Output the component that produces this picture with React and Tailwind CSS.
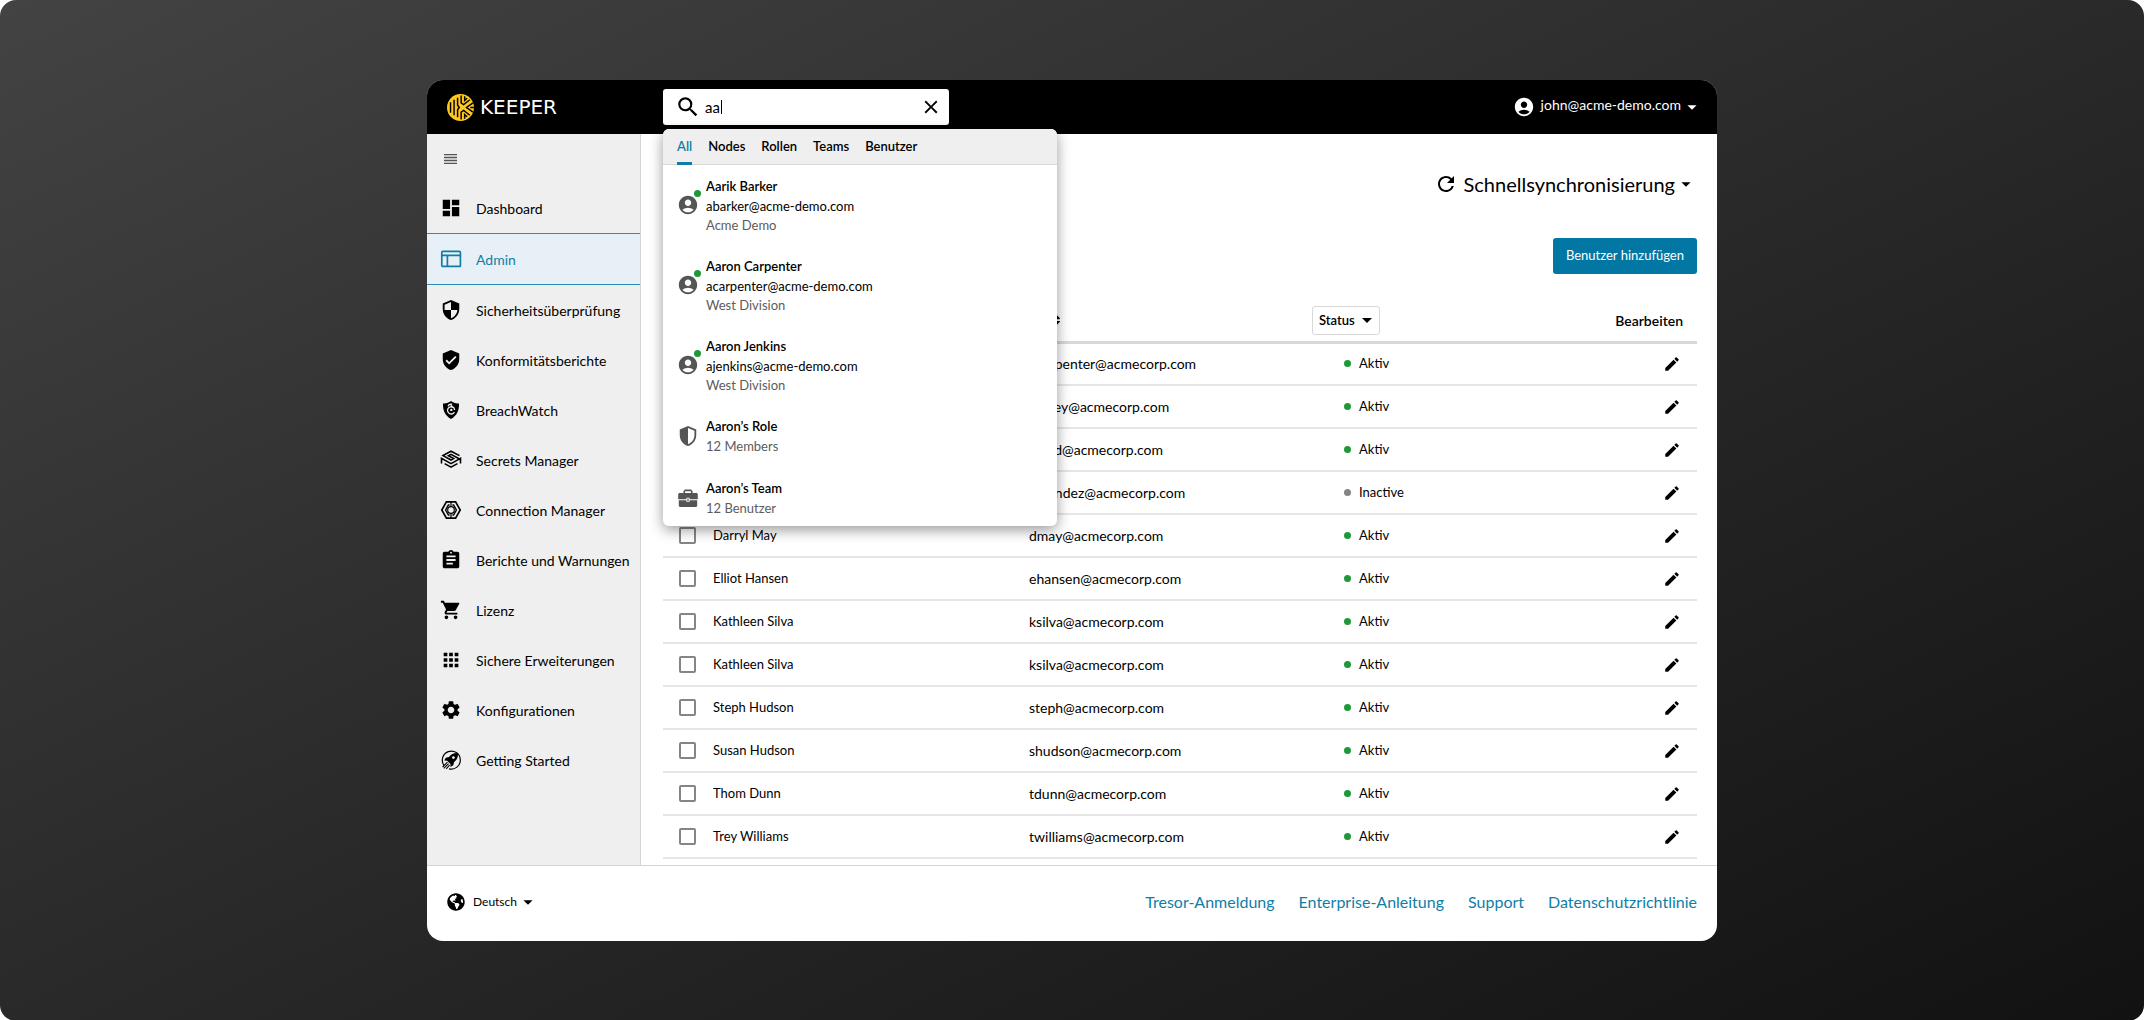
import { useState } from 'react'
import {
  MdDashboard, MdSecurity, MdVerifiedUser, MdAssignment, MdShoppingCart, MdApps, MdSettings,
  MdAccountCircle, MdSearch, MdClose, MdRefresh, MdArrowDropDown, MdEdit,
} from 'react-icons/md'
import { FaGlobeAmericas, FaSort } from 'react-icons/fa'

function KeeperMark() {
  return (
    <svg viewBox="0 0 26 26" className="size-[27px]" fill="none" stroke="#000" strokeWidth="1.4">
      <circle cx="13" cy="13" r="13" fill="#ffc81f" stroke="none" />
      <path d="M3.4 8v10M6.8 5.5v15M10.2 3.5v7.3l1.6 2.2-1.6 2.2v7.3" />
      <path d="M13.6 1.5v7l2.4 1.6 6-4.6M13.6 24.5v-7l2.4-1.6 6 4.6" />
      <path d="M17 2.2v3.9l2.4-2M17 23.8v-3.9l2.4 2" />
      <path d="M25 8.6l-6.2 4.4 6.2 4.4M22.4 13H26" />
    </svg>
  )
}

function AdminIcon() {
  return (
    <svg viewBox="0 0 22 22" className="size-[22px]" fill="none" stroke="currentColor" strokeWidth="1.7">
      <rect x="1.8" y="3.4" width="18.6" height="15" rx="1" />
      <path d="M1.8 7.4h18.6M7.4 7.4v11" />
    </svg>
  )
}

function BreachWatchIcon() {
  return (
    <svg viewBox="0 0 22 22" className="size-[22px]">
      <path d="M3 4.4c3 .3 5.8-.5 8-2.4 2.2 1.9 5 2.7 8 2.4.3 6.8-2 12-8 15.6C5 16.4 2.7 11.2 3 4.4z" fill="currentColor" />
      <path d="M13.4 8.6a3.6 3.6 0 1 0 1 4.3M8 7.2c.6-1.5 2-2.2 3.4-2-.6.9-.4 1.7.6 2.2 1.7.9 2.6 2 2.6 3.6" fill="none" stroke="#efefef" strokeWidth="1.3" />
      <circle cx="11.3" cy="10.9" r="1.2" fill="#efefef" />
    </svg>
  )
}

function SecretsIcon() {
  return (
    <svg viewBox="0 0 22 22" className="size-[22px]" fill="none" stroke="currentColor" strokeWidth="1.6">
      <path d="M19.5 6.6L11 2.2 3 6.6l8 4.4 2.6-1.4-5.2-2.9L11 5.3l8.6 4.7" />
      <path d="M1.5 14.4V9.4L11 14.6l9.5-5.2v5" />
      <path d="M4.6 14.6L11 18.2l6.4-3.6" />
    </svg>
  )
}

function ConnectionIcon() {
  return (
    <svg viewBox="0 0 22 22" className="size-[22px]" fill="none" stroke="currentColor" strokeWidth="1.7">
      <path d="M6.4 2.8h9.2L20.2 11l-4.6 8.2H6.4L1.8 11z" />
      <path d="M9.6 6H8.4L5.6 11l2.8 5h1.2M12.4 6h1.2l2.8 5-2.8 5h-1.2" strokeWidth="1.4" />
      <path d="M11 3v4.5M11 14.5V19" strokeWidth="1.2" />
      <circle cx="11" cy="11" r="3.3" strokeWidth="1.2" />
    </svg>
  )
}

function RocketIcon() {
  return (
    <svg viewBox="0 0 22 22" className="size-[22px]">
      <path d="M4.2 16.6A9 9 0 1 1 9 19.8" fill="none" stroke="currentColor" strokeWidth="1.2" />
      <path d="M18 4c-4.2-.3-7 1.2-9 4l-3.2.8-1.6 2.8 3 .1 3.2 3.2.1 3 2.8-1.6.8-3.2c2.8-2 4.2-4.9 3.9-9.1z" fill="currentColor" />
      <circle cx="13.4" cy="8.6" r="1.4" fill="#efefef" />
      <path d="M7.4 13.2L2.6 18M8.6 14.6l-4.8 4.8M9.6 16.2l-3.4 3.6" stroke="currentColor" strokeWidth="1.1" />
    </svg>
  )
}

function HalfShieldIcon() {
  return (
    <svg viewBox="0 0 24 24" className="size-[22px]" fill="currentColor" fillRule="evenodd">
      <path d="M12 1L3 5v6c0 5.55 3.84 10.74 9 12 5.16-1.26 9-6.45 9-12V5l-9-4zm0 2.2l7 3.1V11c0 4.5-2.9 8.7-7 9.9V3.2z" />
    </svg>
  )
}

function BriefcaseIcon() {
  return (
    <svg viewBox="0 0 22 22" className="size-[22px]" fill="currentColor">
      <path d="M8 2.6h6l1.6 1.6V6H14V4.2H8V6H6.4V4.2z" />
      <path d="M2.6 6h16.8c.8 0 1.4.6 1.4 1.4v4.8h-8.2v-1.4H9.4v1.4H1.2V7.4C1.2 6.6 1.8 6 2.6 6z" />
      <path d="M1.8 13.2h7.6v1.6h3.2v-1.6h7.6v5.4c0 .8-.5 1.4-1.3 1.4H3.1c-.8 0-1.3-.6-1.3-1.4z" />
      <path d="M10.4 11.6h1.2v2.4h-1.2z" />
    </svg>
  )
}

const navItems = [
  { label: 'Dashboard', icon: MdDashboard },
  { label: 'Admin', icon: AdminIcon },
  { label: 'Sicherheitsüberprüfung', icon: MdSecurity },
  { label: 'Konformitätsberichte', icon: MdVerifiedUser },
  { label: 'BreachWatch', icon: BreachWatchIcon },
  { label: 'Secrets Manager', icon: SecretsIcon },
  { label: 'Connection Manager', icon: ConnectionIcon },
  { label: 'Berichte und Warnungen', icon: MdAssignment },
  { label: 'Lizenz', icon: MdShoppingCart },
  { label: 'Sichere Erweiterungen', icon: MdApps },
  { label: 'Konfigurationen', icon: MdSettings },
  { label: 'Getting Started', icon: RocketIcon },
]

const users = [
  { name: '', email: 'acarpenter@acmecorp.com', active: true },
  { name: '', email: 'cauley@acmecorp.com', active: true },
  { name: '', email: 'bford@acmecorp.com', active: true },
  { name: '', email: 'amendez@acmecorp.com', active: false },
  { name: 'Darryl May', email: 'dmay@acmecorp.com', active: true },
  { name: 'Elliot Hansen', email: 'ehansen@acmecorp.com', active: true },
  { name: 'Kathleen Silva', email: 'ksilva@acmecorp.com', active: true },
  { name: 'Kathleen Silva', email: 'ksilva@acmecorp.com', active: true },
  { name: 'Steph Hudson', email: 'steph@acmecorp.com', active: true },
  { name: 'Susan Hudson', email: 'shudson@acmecorp.com', active: true },
  { name: 'Thom Dunn', email: 'tdunn@acmecorp.com', active: true },
  { name: 'Trey Williams', email: 'twilliams@acmecorp.com', active: true },
]

const tabs = ['All', 'Nodes', 'Rollen', 'Teams', 'Benutzer']

const results = [
  { type: 'user', title: 'Aarik Barker', email: 'abarker@acme-demo.com', detail: 'Acme Demo' },
  { type: 'user', title: 'Aaron Carpenter', email: 'acarpenter@acme-demo.com', detail: 'West Division' },
  { type: 'user', title: 'Aaron Jenkins', email: 'ajenkins@acme-demo.com', detail: 'West Division' },
  { type: 'role', title: 'Aaron’s Role', detail: '12 Members' },
  { type: 'team', title: 'Aaron’s Team', detail: '12 Benutzer' },
]

const links = ['Tresor-Anmeldung', 'Enterprise-Anleitung', 'Support', 'Datenschutzrichtlinie']

function SearchResults() {
  const [activeTab, setActiveTab] = useState('All')

  return (
    <div className="absolute left-0 top-full z-10 mt-1 w-[394px] overflow-hidden rounded-md bg-white text-black shadow-[0_4px_14px_rgba(0,0,0,0.4)]">
      <div className="flex h-9 gap-4 border-b border-[#d8d8d8] bg-[#efefef] px-3.5">
        {tabs.map(tab => (
          <button
            key={tab}
            onClick={() => setActiveTab(tab)}
            className={`h-9 border-b-[3px] pt-0.5 text-[13px] font-semibold ${activeTab === tab ? 'border-[#0f7ea6] text-[#0f7ea6]' : 'border-transparent'}`}
          >
            {tab}
          </button>
        ))}
      </div>
      <ul className="flex flex-col gap-[22px] px-3.5 pb-2 pt-[11px]">
        {results.map(result => (
          <li key={result.title} className="flex items-center gap-[7px]">
            <span className="relative text-[#555]">
              {result.type === 'user' && <MdAccountCircle className="size-[22px]" />}
              {result.type === 'user' && <span className="absolute -top-1 right-[-2px] size-[7px] rounded-full bg-[#1e9937]" />}
              {result.type === 'role' && <HalfShieldIcon />}
              {result.type === 'team' && <BriefcaseIcon />}
            </span>
            <div className="text-[13px]">
              <p className="font-semibold leading-5">{result.title}</p>
              {result.email && <p className="leading-5">{result.email}</p>}
              <p className={`text-[#5c5c5c] ${result.email ? 'leading-[18px]' : 'leading-5'}`}>{result.detail}</p>
            </div>
          </li>
        ))}
      </ul>
    </div>
  )
}

function Header() {
  const [query, setQuery] = useState('aa')

  return (
    <header className="flex h-[54px] items-center rounded-t-2xl bg-black pr-3.5 text-white">
      <div className="flex w-[236px] items-center gap-1.5 pl-5">
        <KeeperMark />
        <span className="font-['DejaVu_Sans',sans-serif] text-[20px]">KEEPER</span>
      </div>

      {/* Search */}
      <div className="relative">
        <div className="flex h-9 w-[286px] items-center rounded-[3px] bg-white pl-3 pr-[7px] text-black">
          <MdSearch className="size-[26px]" />
          <input
            type="text"
            aria-label="Suche"
            value={query}
            onChange={(e) => setQuery(e.target.value)}
            className="ml-1 mr-px min-w-0 text-[15px] outline-none [field-sizing:content]"
          />
          <span className="h-3.5 w-px bg-black" />
          <button aria-label="Suche leeren" onClick={() => setQuery('')} className="ml-auto">
            <MdClose className="size-[22px]" />
          </button>
        </div>
        <SearchResults />
      </div>

      <button className="ml-auto flex items-center text-sm">
        <MdAccountCircle className="mr-1.5 size-[22px]" />
        <span className="pb-1">john@acme-demo.com</span>
        <MdArrowDropDown className="size-[22px]" />
      </button>
    </header>
  )
}

function Sidebar() {
  return (
    <nav className="w-[214px] shrink-0 border-r border-[#d4d4d4] bg-[#efefef]">
      <button aria-label="Menü" className="flex h-[49px] w-full items-center pl-[17px]">
        <svg viewBox="0 0 13 10" className="h-2.5 w-[13px]" stroke="#555" strokeWidth="1.3">
          <path d="M0 .6h13M0 3.5h13M0 6.5h13M0 9.4h13" />
        </svg>
      </button>
      {navItems.map(({ label, icon: Icon }) => (
        <a
          key={label}
          href="#"
          className={`flex items-center gap-3.5 whitespace-nowrap pl-[13px] text-[14px] ${label === 'Admin' ? 'h-[52px] border-y border-[#2a8fb3] bg-[#e7f0f7] text-[#0f7ea6]' : 'h-[50px] text-black'}`}
        >
          <Icon className="size-[22px]" />
          {label}
        </a>
      ))}
    </nav>
  )
}

function UserTable() {
  return (
    <table className="mt-[26px] w-full table-fixed text-left text-[13px]">
      <thead>
        <tr className="h-[42px] border-b-[3px] border-[#d8d8d8]">
          <th className="w-[50px]" />
          <th className="w-[316px]" />
          <th className="w-[283px]">
            <button aria-label="Sortieren" className="ml-5 block">
              <FaSort className="size-3.5" />
            </button>
          </th>
          <th className="w-[200px]">
            <button className="flex h-[29px] items-center rounded-[3px] border border-[#d8d8d8] pl-1.5 font-semibold">
              Status
              <MdArrowDropDown className="size-6" />
            </button>
          </th>
          <th className="pr-3.5 text-right text-[14px] font-semibold">Bearbeiten</th>
        </tr>
      </thead>
      <tbody>
        {users.map((user, index) => (
          <tr key={index} className="h-[43px] border-b-2 border-[#e6e6e6]">
            <td className="pl-4">
              <input
                type="checkbox"
                aria-label={user.name || user.email}
                className="block size-[17px] appearance-none rounded-[2px] border-2 border-[#858585] bg-white"
              />
            </td>
            <td>{user.name}</td>
            <td className="text-[14px]">{user.email}</td>
            <td>
              <span className="flex items-center gap-2 pl-8">
                <span className={`size-[7px] rounded-full ${user.active ? 'bg-[#1e9937]' : 'bg-[#858585]'}`} />
                {user.active ? 'Aktiv' : 'Inactive'}
              </span>
            </td>
            <td className="pr-4">
              <button aria-label="Bearbeiten" className="ml-auto block">
                <MdEdit className="size-[18px]" />
              </button>
            </td>
          </tr>
        ))}
      </tbody>
    </table>
  )
}

export default function App() {
  return (
    <div className="min-h-screen rounded-2xl bg-linear-to-br from-[#434343] to-[#121212] px-6 py-20 font-['Lato',sans-serif] text-black">
      <div className="mx-auto w-full max-w-[1290px] rounded-2xl bg-white">
        <Header />

        <div className="flex">
          <Sidebar />
          <main className="min-w-0 flex-1 pb-1.5 pl-[22px] pr-5 pt-9">
            <button className="ml-auto flex h-7 items-center text-[20px]">
              <MdRefresh className="mr-1.5 size-6" />
              Schnellsynchronisierung
              <MdArrowDropDown className="size-[22px]" />
            </button>
            <button className="ml-auto mt-10 block h-9 rounded-[3px] bg-[#0277a3] px-[13px] text-[13px] text-white">
              Benutzer hinzufügen
            </button>
            <UserTable />
          </main>
        </div>

        <footer className="flex h-[76px] items-center justify-between border-t border-[#d4d4d4] px-5 pb-1">
          <button className="flex items-center text-[12px]">
            <FaGlobeAmericas className="mr-2 size-[18px]" />
            Deutsch
            <MdArrowDropDown className="size-[22px]" />
          </button>
          <div className="flex gap-6 text-[16px] text-[#0f7ea6]">
            {links.map(link => (
              <a key={link} href="#">{link}</a>
            ))}
          </div>
        </footer>
      </div>
    </div>
  )
}
